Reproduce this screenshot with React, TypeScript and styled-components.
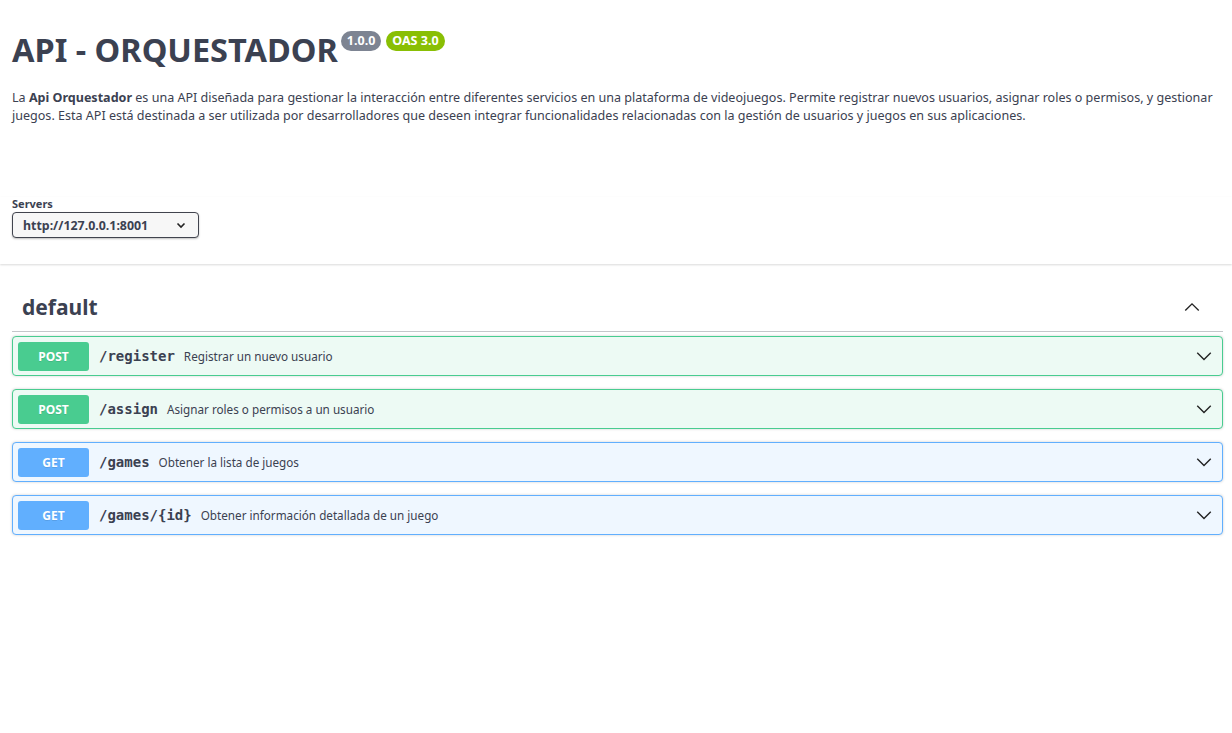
import React from "react";
import styled, { createGlobalStyle } from "styled-components";

const Global = createGlobalStyle`
  html, body { margin: 0; padding: 0; background: #fff; }
  body { font-family: "Noto Sans", "Open Sans", sans-serif; color: #3b4151; }
  * { box-sizing: border-box; }
`;

const Page = styled.div`
  width: 100%;
  min-height: 733px;
  background: #fff;
`;

const InfoWrap = styled.div`
  padding: 0 12px;
`;

const Info = styled.div`
  padding-top: 28px;
`;

const TitleRow = styled.div`
  display: flex;
  align-items: flex-start;
`;

const Title = styled.h1`
  margin: 0;
  font-size: 32.5px;
  font-weight: 700;
  line-height: 44px;
  color: #3b4151;
`;

const Badges = styled.div`
  display: flex;
  gap: 5px;
  margin-left: 3px;
  margin-top: 3px;
`;

const Badge = styled.span<{ $bg: string }>`
  display: inline-block;
  background: ${(p) => p.$bg};
  color: #fff;
  font-size: 12.5px;
  font-weight: 700;
  line-height: 16px;
  padding: 2px 6px;
  border-radius: 57px;
`;

const Description = styled.p`
  margin: 17px 0 0;
  font-size: 12.55px;
  line-height: 18px;
  color: #3b4151;
  b { font-weight: 700; }
`;

const SchemeContainer = styled.div`
  margin-top: 72px;
  padding: 0 12px 26px;
  box-shadow: 0 1px 2px 0 rgba(0, 0, 0, 0.15);
`;

const ServersLabel = styled.div`
  font-size: 11px;
  font-weight: 700;
  line-height: 14px;
  color: #3b4151;
`;

const Select = styled.div`
  margin-top: 1px;
  width: 187px;
  height: 26px;
  border: 1px solid #41444e;
  border-radius: 4px;
  box-shadow: 0 1px 2px 0 rgba(0, 0, 0, 0.25);
  display: flex;
  align-items: center;
  justify-content: space-between;
  padding: 0 12px 0 10px;
  font-size: 12.4px;
  font-weight: 700;
  color: #3b4151;
  background: #f7f7f7;
`;

const Ops = styled.div`
  padding: 24px 9px 0 12px;
`;

const TagHeader = styled.div`
  display: flex;
  align-items: center;
  justify-content: space-between;
  height: 44px;
  padding: 0 22px 6px 10px;
  border-bottom: 1px solid rgba(59, 65, 81, 0.3);
`;

const TagTitle = styled.h3`
  margin: 0;
  font-size: 21px;
  font-weight: 700;
  color: #3b4151;
`;

const OpList = styled.div`
  padding-top: 4px;
  display: flex;
  flex-direction: column;
  gap: 13px;
`;

const Opblock = styled.div<{ $color: string; $bg: string }>`
  height: 40px;
  border: 1px solid ${(p) => p.$color};
  background: ${(p) => p.$bg};
  border-radius: 4px;
  box-shadow: 0 0 3px rgba(0, 0, 0, 0.19);
  display: flex;
  align-items: center;
  padding: 0 9px 0 5px;
`;

const Method = styled.span<{ $color: string }>`
  width: 71px;
  height: 29px;
  border-radius: 3px;
  background: ${(p) => p.$color};
  color: #fff;
  font-size: 12px;
  font-weight: 700;
  display: flex;
  align-items: center;
  justify-content: center;
  text-shadow: 0 1px 0 rgba(0, 0, 0, 0.1);
`;

const Path = styled.span`
  margin-left: 10px;
  font-family: "DejaVu Sans Mono", monospace;
  font-weight: 700;
  font-size: 14px;
  color: #3b4151;
`;

const Summary = styled.span`
  margin-left: 9px;
  font-size: 11.7px;
  color: #3b4151;
  flex: 1;
`;

const Chevron = ({ up }: { up?: boolean }) => (
  <svg width="18" height="18" viewBox="0 0 20 20" fill="none">
    <path
      d={up ? "M2.5 14 L10 6.5 L17.5 14" : "M2.5 6.5 L10 14 L17.5 6.5"}
      stroke="#222"
      strokeWidth="1.5"
    />
  </svg>
);

const SmallChevron = () => (
  <svg width="10" height="10" viewBox="0 0 10 10" fill="none">
    <path d="M1.5 3.5 L5 7 L8.5 3.5" stroke="#222" strokeWidth="1.6" />
  </svg>
);

const ops = [
  { m: "POST", path: "/register", sum: "Registrar un nuevo usuario" },
  { m: "POST", path: "/assign", sum: "Asignar roles o permisos a un usuario" },
  { m: "GET", path: "/games", sum: "Obtener la lista de juegos" },
  { m: "GET", path: "/games/{id}", sum: "Obtener información detallada de un juego" },
];

const colors: Record<string, { c: string; bg: string }> = {
  POST: { c: "#49cc90", bg: "#edfaf4" },
  GET: { c: "#61affe", bg: "#eff7ff" },
};

export default function App() {
  return (
    <Page>
      <Global />
      <InfoWrap>
        <Info>
          <TitleRow>
            <Title>API - ORQUESTADOR</Title>
            <Badges>
              <Badge $bg="#7d8492">1.0.0</Badge>
              <Badge $bg="#89bf04">OAS 3.0</Badge>
            </Badges>
          </TitleRow>
          <Description>
            La <b>Api Orquestador</b> es una API diseñada para gestionar la interacción entre diferentes
            servicios en una plataforma de videojuegos. Permite registrar nuevos usuarios, asignar roles o
            permisos, y gestionar juegos. Esta API está destinada a ser utilizada por desarrolladores que
            deseen integrar funcionalidades relacionadas con la gestión de usuarios y juegos en sus
            aplicaciones.
          </Description>
        </Info>
      </InfoWrap>
      <SchemeContainer>
        <ServersLabel>Servers</ServersLabel>
        <Select>
          <span>http://127.0.0.1:8001</span>
          <SmallChevron />
        </Select>
      </SchemeContainer>
      <Ops>
        <TagHeader>
          <TagTitle>default</TagTitle>
          <Chevron up />
        </TagHeader>
        <OpList>
          {ops.map((o) => (
            <Opblock key={o.path} $color={colors[o.m].c} $bg={colors[o.m].bg}>
              <Method $color={colors[o.m].c}>{o.m}</Method>
              <Path>{o.path}</Path>
              <Summary>{o.sum}</Summary>
              <Chevron />
            </Opblock>
          ))}
        </OpList>
      </Ops>
    </Page>
  );
}
